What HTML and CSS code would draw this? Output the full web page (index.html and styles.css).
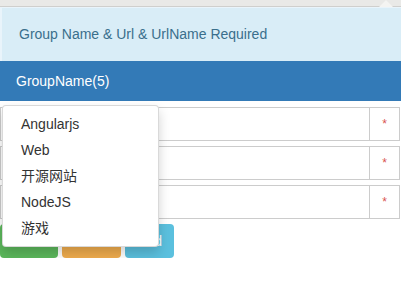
FILE: index.html
```html
<!DOCTYPE html>
<html lang="zh">
<head>
  <meta charset="UTF-8">
  <title>Group</title>
  <link rel="stylesheet" href="styles.css">
</head>
<body>

<div class="topbar"></div>
<div class="popover">
  <span class="arrow"></span>
  <div class="alert">Group Name &amp; Url &amp; UrlName Required</div>
</div>

<div class="panel">
  <div class="panel-heading">GroupName(5)</div>
  <form class="panel-body">
    <div class="input-group">
      <input type="text" class="form-control">
      <span class="addon">*</span>
    </div>
    <div class="input-group">
      <input type="text" class="form-control">
      <span class="addon">*</span>
    </div>
    <div class="input-group">
      <input type="text" class="form-control">
      <span class="addon">*</span>
    </div>
    <div class="actions">
      <button type="button" class="btn btn-success">Save</button>
      <button type="button" class="btn btn-warning">Reset</button>
      <button type="button" class="btn btn-info">Add</button>
    </div>
  </form>

  <ul class="dropdown-menu">
    <li>Angularjs</li>
    <li>Web</li>
    <li>开源网站</li>
    <li>NodeJS</li>
    <li>游戏</li>
  </ul>
</div>

</body>
</html>
```

FILE: styles.css
```css
* {
  box-sizing: border-box;
}
body {
  margin: 0;
  font-family: 'Liberation Sans', Arial, 'Noto Sans CJK SC', sans-serif;
  font-size: 14px;
  line-height: 20px;
  color: #333;
  background: #fff;
  position: relative;
}
.topbar {
  height: 7px;
  background: #e9e9e7;
  border-bottom: 1px solid #cfcfcd;
}
.popover {
  position: relative;
  padding-top: 1px;
  background: #e9f4fb;
}
.arrow {
  position: absolute;
  top: -7px;
  right: 8px;
  width: 0;
  height: 0;
  border-left: 7px solid transparent;
  border-right: 7px solid transparent;
  border-bottom: 7px solid #f4f4f2;
}
.alert {
  height: 53px;
  padding: 16px 17px;
  margin-left: 2px;
  background: #d9edf7;
  color: #3a6f8c;
}
.panel {
  position: relative;
}
.panel-heading {
  height: 40px;
  padding: 10px 16px;
  background: #337ab7;
  color: #fff;
}
.panel-body {
  margin: 0;
  padding: 6px 1px 0 0;
}
.input-group {
  display: flex;
  height: 34px;
  margin-bottom: 5px;
}
.form-control {
  flex: 1;
  height: 34px;
  padding: 6px 12px;
  border: 1px solid #ccc;
  border-right: none;
  font: inherit;
}
.addon {
  width: 31px;
  border: 1px solid #ccc;
  color: #d9534f;
  font-size: 12px;
  text-align: center;
  line-height: 32px;
}
.actions {
  display: flex;
  gap: 4px;
}
.btn {
  height: 34px;
  padding: 6px 12px;
  border: none;
  border-radius: 4px;
  color: #fff;
  font: inherit;
}
.btn-success {
  width: 58px;
  background: #5cb85c;
}
.btn-warning {
  width: 59px;
  background: #f0ad4e;
}
.btn-info {
  width: 49px;
  background: #5bc0de;
}
.dropdown-menu {
  position: absolute;
  left: 2px;
  top: 44px;
  width: 157px;
  margin: 0;
  padding: 5px 0;
  list-style: none;
  background: #fff;
  border: 1px solid rgba(0, 0, 0, 0.15);
  border-radius: 4px;
  box-shadow: 0 6px 12px rgba(0, 0, 0, 0.175);
}
.dropdown-menu li {
  padding: 3px 18px;
  color: #333;
}
```
